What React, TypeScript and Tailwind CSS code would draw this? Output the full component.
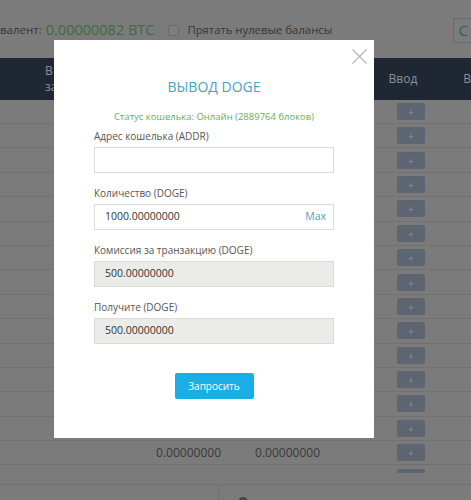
import React from "react";

const ROWS = 14;

function PlusButton() {
	return (
		<div className="ml-[17px] flex h-[17px] w-[28px] items-center justify-center rounded-[2px] bg-[#5d6570] text-[11px] leading-none text-[#8b929b]">
			+
		</div>
	);
}

function Row({ first, second }: { first?: string; second?: string }) {
	return (
		<div className="flex h-[24.4px] items-center border-b border-[#717171] text-[12px] text-[#3a3a3a]">
			<div className="w-[140px]" />
			<div className="w-[91px] pr-[10px] text-right">{first}</div>
			<div className="w-[99px] pr-[10px] text-right">{second}</div>
			<div className="w-[50px]" />
			<div className="w-[75px]">
				<PlusButton />
			</div>
		</div>
	);
}

export default function App() {
	return (
		<div
			className="relative h-[500px] w-[471px] overflow-hidden bg-[#7b7b7b]"
			style={{ fontFamily: '"Open Sans", "Noto Sans", sans-serif' }}
		>
			{/* top bar */}
			<div className="flex h-[58px] items-center whitespace-nowrap pt-[2px]">
				<span className="shrink-0 text-[11.5px] text-[#363636]">валент:</span>
				<span className="ml-[4px] shrink-0 text-[14.5px] text-[#3d6b3d]">0.00000082 BTC</span>
				<span className="ml-[14px] h-[11px] w-[11px] shrink-0 rounded-[2px] border border-[#6c6c6c] bg-[#7e7e7e]" />
				<span className="ml-[8px] shrink-0 text-[11.3px] text-[#363636]">Прятать нулевые балансы</span>
				<span className="ml-[121px] flex h-[25px] w-[30px] shrink-0 items-center border border-[#6a6a6a] pl-[4px] text-[15px] text-[#2c5d77]">
					С
				</span>
			</div>

			{/* table header */}
			<div className="flex h-[41.6px] items-center bg-[#1f2733] text-[12px] text-[#8a9099]">
				<div className="w-[140px] pl-[45px] leading-[16px]">
					<div>В</div>
					<div>за</div>
				</div>
				<div className="w-[91px]" />
				<div className="w-[99px]" />
				<div className="w-[50px]" />
				<div className="w-[75px] pl-[10px]">Ввод</div>
				<div className="pl-[10px]">В</div>
			</div>

			{Array.from({ length: ROWS }).map((_, i) => (
				<Row key={i} />
			))}
			<Row first="0.00000000" second="0.00000000" />

			<div className="flex h-[20px] border-b border-[#717171]">
				<div className="ml-[397px] mt-[4px] h-[4px] w-[28px] rounded-t-[2px] bg-[#5d6570]" />
			</div>

			{/* footer */}
			<div className="flex h-[20px]">
				<div className="w-[219px] border-r border-[#717171]" />
				<div className="pl-[19px] pt-[12px]">
					<div className="h-[10px] w-[10px] rounded-full bg-[#474747]" />
				</div>
			</div>

			{/* modal */}
			<div className="absolute left-[54px] top-[40px] h-[398px] w-[320px] bg-white px-[40px] pt-[37px]">
				<button
					type="button"
					className="absolute right-[7px] top-[9px] h-[15px] w-[15px]"
					aria-label="Закрыть"
				>
					<svg width="15" height="15" viewBox="0 0 15 15" fill="none" stroke="#b5b5b5" strokeWidth="1.2">
						<path d="M0.5 0.5 L14.5 14.5 M14.5 0.5 L0.5 14.5" />
					</svg>
				</button>

				<div className="text-center text-[14px] leading-[20px] text-[#4a9fc8]">ВЫВОД DOGE</div>
				<div className="mt-[13px] text-center text-[9.5px] leading-[14px] text-[#6aae4e]">
					Статус кошелька: Онлайн (2889764 блоков)
				</div>

				<div className="mt-[5px] text-[10px] leading-[14px] text-[#555]">Адрес кошелька (ADDR)</div>
				<div className="mt-[4px] h-[26px] border border-[#dcdcdc] bg-white" />

				<div className="mt-[13px] text-[10px] leading-[14px] text-[#555]">Количество (DOGE)</div>
				<div className="mt-[4px] flex h-[26px] items-center justify-between border border-[#dcdcdc] bg-white pl-[10px] pr-[7px] text-[10.5px] text-[#333]">
					<span>1000.00000000</span>
					<span className="text-[#4aa3c8]">Max</span>
				</div>

				<div className="mt-[13px] text-[10px] leading-[14px] text-[#555]">Комиссия за транзакцию (DOGE)</div>
				<div className="mt-[4px] flex h-[26px] items-center border border-[#dcdcd7] bg-[#ebebe7] pl-[10px] text-[10.5px] text-[#333]">
					500.00000000
				</div>

				<div className="mt-[13px] text-[10px] leading-[14px] text-[#555]">Получите (DOGE)</div>
				<div className="mt-[4px] flex h-[26px] items-center border border-[#dcdcd7] bg-[#ebebe7] pl-[10px] text-[10.5px] text-[#333]">
					500.00000000
				</div>

				<div className="mt-[29px] flex justify-center">
					<button
						type="button"
						className="h-[26px] w-[79px] rounded-[2px] bg-[#1aaee6] text-[10px] text-white"
					>
						Запросить
					</button>
				</div>
			</div>
		</div>
	);
}
